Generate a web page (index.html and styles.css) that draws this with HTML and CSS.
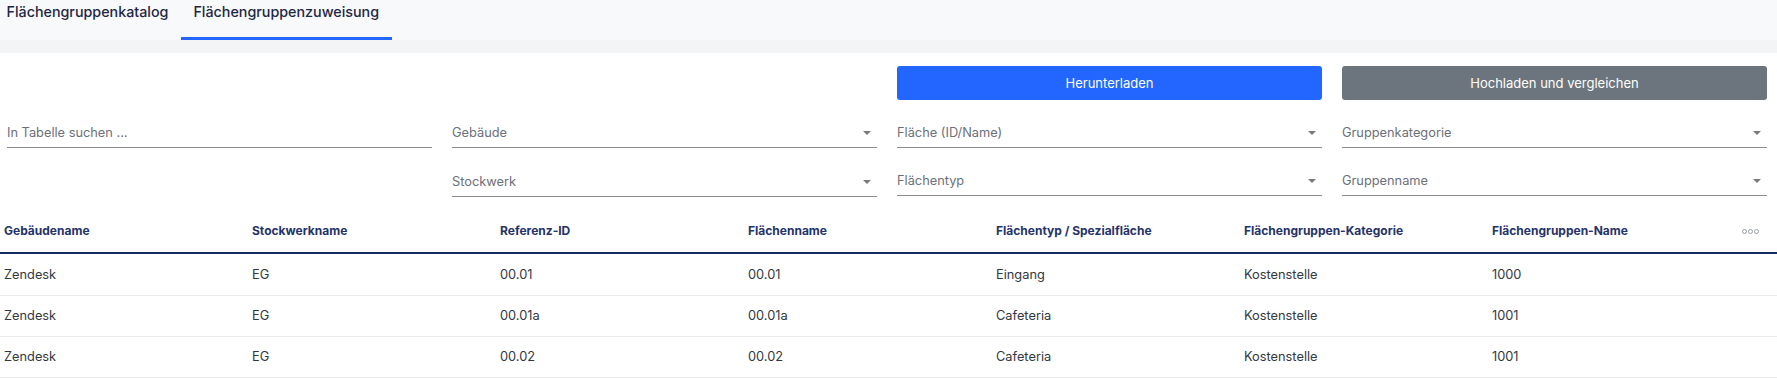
FILE: index.html
```html
<!DOCTYPE html>
<html lang="de">
<head>
<meta charset="utf-8">
<title>Flächengruppenzuweisung</title>
<link rel="stylesheet" href="styles.css">
</head>
<body>
<nav class="tabs">
  <div class="tab">Flächengruppenkatalog</div>
  <div class="tab active">Flächengruppenzuweisung</div>
</nav>
<div class="band"></div>
<section class="toolbar">
  <div class="spacer"></div>
  <div class="spacer"></div>
  <button class="btn btn-primary">Herunterladen</button>
  <button class="btn btn-secondary">Hochladen und vergleichen</button>

  <div class="field"><span class="placeholder">In Tabelle suchen ...</span></div>
  <div class="field select"><span class="placeholder">Gebäude</span><span class="caret"></span></div>
  <div class="field select"><span class="placeholder">Fläche (ID/Name)</span><span class="caret"></span></div>
  <div class="field select"><span class="placeholder">Gruppenkategorie</span><span class="caret"></span></div>

  <div class="spacer"></div>
  <div class="field select"><span class="placeholder">Stockwerk</span><span class="caret"></span></div>
  <div class="field select"><span class="placeholder">Flächentyp</span><span class="caret"></span></div>
  <div class="field select"><span class="placeholder">Gruppenname</span><span class="caret"></span></div>
</section>
<table class="grid">
  <colgroup>
    <col class="c"><col class="c"><col class="c"><col class="c"><col class="c"><col class="c"><col class="c"><col>
  </colgroup>
  <thead>
    <tr>
      <th>Gebäudename</th>
      <th>Stockwerkname</th>
      <th>Referenz-ID</th>
      <th>Flächenname</th>
      <th>Flächentyp / Spezialfläche</th>
      <th>Flächengruppen-Kategorie</th>
      <th>Flächengruppen-Name</th>
      <th class="actions"><span class="dots"><i></i><i></i><i></i></span></th>
    </tr>
  </thead>
  <tbody>
    <tr><td>Zendesk</td><td>EG</td><td>00.01</td><td>00.01</td><td>Eingang</td><td>Kostenstelle</td><td>1000</td><td></td></tr>
    <tr><td>Zendesk</td><td>EG</td><td>00.01a</td><td>00.01a</td><td>Cafeteria</td><td>Kostenstelle</td><td>1001</td><td></td></tr>
    <tr><td>Zendesk</td><td>EG</td><td>00.02</td><td>00.02</td><td>Cafeteria</td><td>Kostenstelle</td><td>1001</td><td></td></tr>
  </tbody>
</table>
</body>
</html>
```
FILE: styles.css
```css
* { box-sizing: border-box; }
html, body { margin: 0; padding: 0; background: #ffffff; }
body {
  font-family: "Inter", "Noto Sans", sans-serif;
  color: #333740;
  overflow: hidden;
}

.tabs {
  display: flex;
  height: 40px;
  background: #f8f9fb;
}
.tab {
  height: 40px;
  padding: 1px 12.5px 0;
  font-size: 14.3px;
  font-weight: 500;
  line-height: 21px;
  color: #1d2744;
  border-bottom: 3px solid transparent;
}
.tab:first-child { margin-left: -6px; }
.tab.active { border-bottom-color: #2266ff; }

.band { height: 13px; background: #f3f4f6; }

.toolbar {
  display: grid;
  grid-template-columns: repeat(4, 425px);
  column-gap: 20px;
  row-gap: 12px;
  padding: 13px 0 0 7px;
}
.btn {
  height: 34px;
  border: 0;
  border-radius: 3px;
  font-family: inherit;
  font-size: 13px;
  color: #ffffff;
  cursor: pointer;
}
.btn-primary { background: #2266ff; }
.btn-secondary { background: #6c757d; }

.field {
  height: 36px;
  display: flex;
  align-items: flex-end;
  justify-content: space-between;
  padding: 0 0 5px 0;
  border-bottom: 1px solid #8c8c8c;
}
.field + .spacer + .field { margin-top: 1px; }
.placeholder {
  font-size: 12.8px;
  line-height: 18px;
  color: #6b6f7a;
}
.caret {
  width: 0;
  height: 0;
  margin: 0 6px 7px 0;
  border-left: 4px solid transparent;
  border-right: 4px solid transparent;
  border-top: 4px solid #7a7a7a;
}

.grid {
  margin-top: 12px;
  width: 1777px;
  border-collapse: collapse;
  table-layout: fixed;
}
.grid col.c { width: 248px; }
.grid th {
  height: 44px;
  padding: 0 4px;
  text-align: left;
  font-size: 12px;
  font-weight: 650;
  color: #24336a;
  border-bottom: 2px solid #172a5e;
  white-space: nowrap;
}
.grid th.actions { padding-left: 6px; }
.dots { display: inline-flex; gap: 1px; vertical-align: middle; }
.dots i {
  display: block;
  width: 5px;
  height: 5px;
  border: 1px solid #9aa0a8;
  border-radius: 50%;
}
.grid td {
  height: 41px;
  padding: 0 4px;
  font-size: 12.8px;
  color: #333740;
  border-bottom: 1px solid #ececec;
  white-space: nowrap;
}
.grid tbody tr:first-child td { height: 42px; }
```
